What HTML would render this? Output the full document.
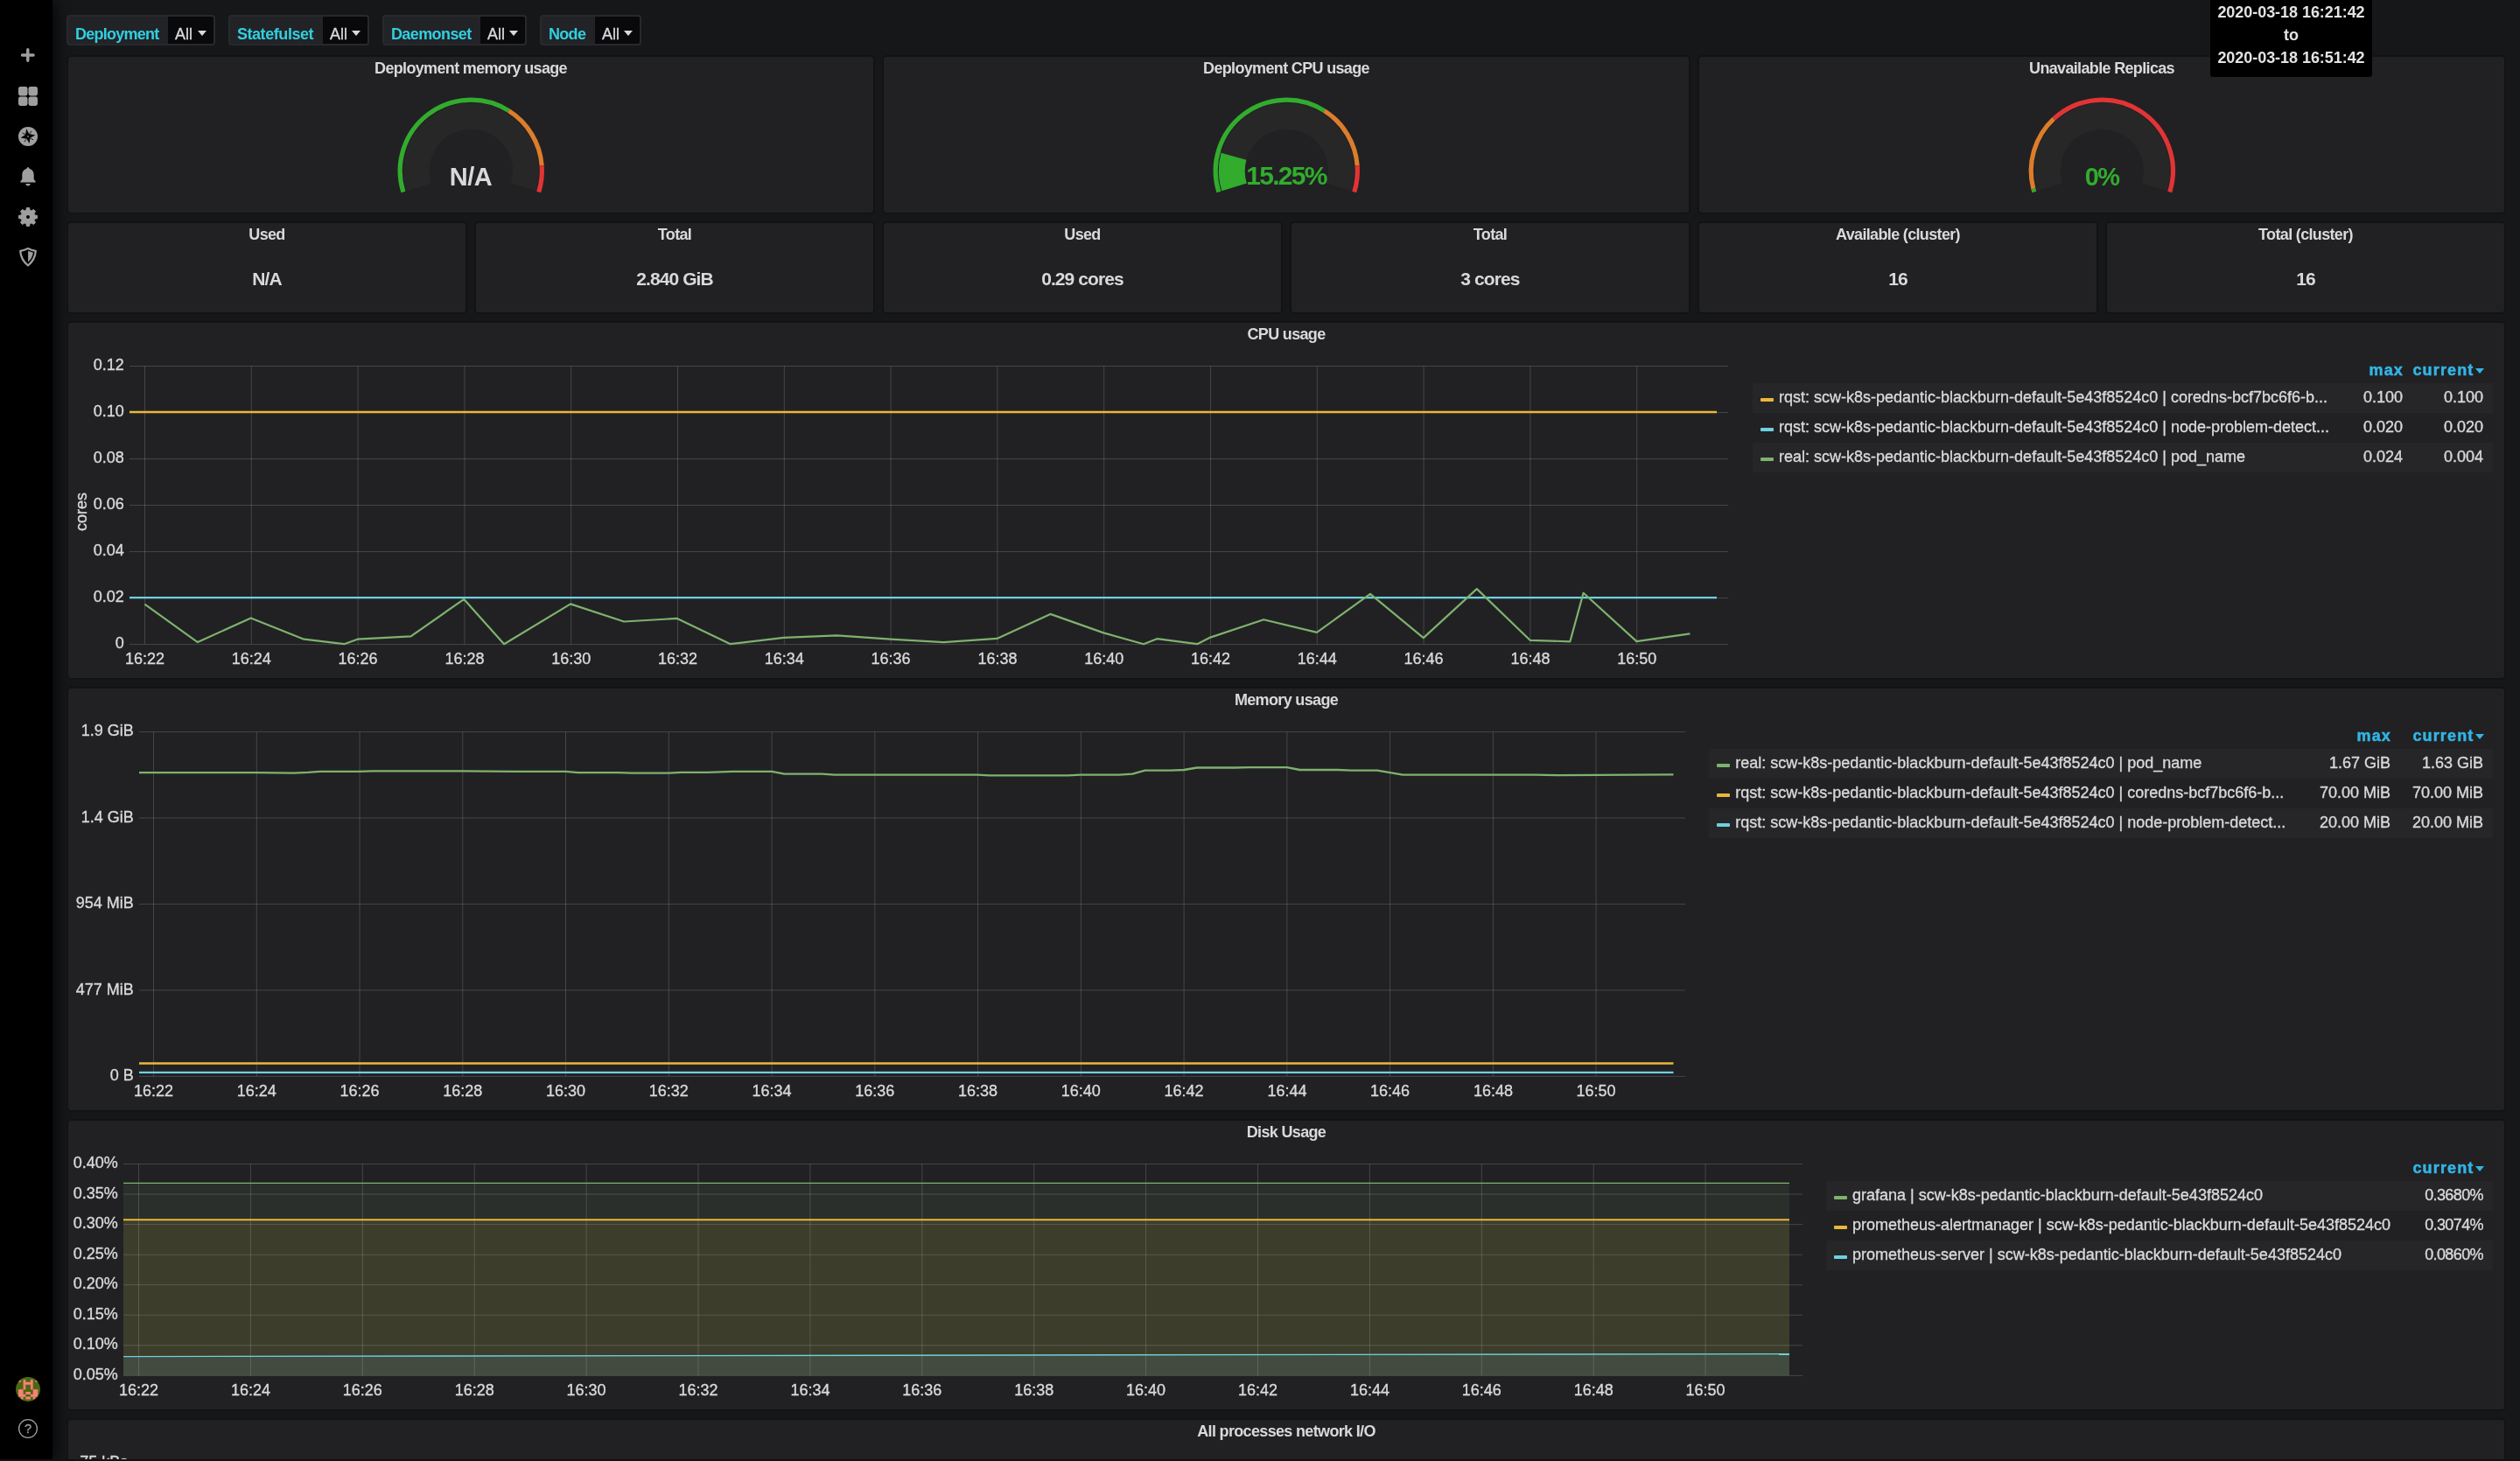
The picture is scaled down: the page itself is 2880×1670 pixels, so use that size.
<!DOCTYPE html>
<html lang="en"><head><meta charset="utf-8"><title>Kubernetes Deployment Statefulset Daemonset metrics - Grafana</title>
<style>
html,body{margin:0;padding:0}
html{width:2880px;height:1670px;overflow:hidden;background:#161719}
body{will-change:transform;width:2880px;height:1670px;overflow:hidden;background:#161719;position:relative;
 font-family:"Liberation Sans",sans-serif;font-size:18px;color:#d8d9da}
*{box-sizing:border-box}
#side{position:absolute;left:0;top:0;width:60px;height:1670px;background:#000;box-shadow:0 0 20px #000}
#side svg{position:absolute;left:0}
.var{position:absolute;top:17px;height:35px;border-radius:4px}
.vl{position:absolute;top:0;left:0;height:35px;background:#222327;border:2px solid #28292d;border-right:0;border-radius:4px 0 0 4px;
 color:#31cfe0;font-weight:bold;font-size:18px;letter-spacing:-0.75px;line-height:40.6px;padding-left:7.9px;white-space:nowrap}
.vv{position:absolute;top:0;height:35px;background:#09090b;border:2px solid #28292d;border-left:0;border-radius:0 4px 4px 0;
 color:#d8d9da;font-size:18px;line-height:40.6px;padding-left:8px;white-space:nowrap;-webkit-text-stroke:0.35px #d8d9da}
.vv i{position:absolute;right:8px;top:16.2px;width:0;height:0;border-left:5.4px solid transparent;border-right:5.4px solid transparent;border-top:6.1px solid #d8d9da}
.panel{position:absolute;background:#212124;border-radius:3px;overflow:hidden;box-shadow:0 0 0 2px #131314}
.pt{position:absolute;left:0;right:0;top:0;height:30px;line-height:30px;text-align:center;font-weight:bold;font-size:18px;letter-spacing:-0.66px;color:#d8d9da;white-space:nowrap}
.sv{position:absolute;left:0;right:0;text-align:center;font-weight:bold;white-space:nowrap}
svg text{font-family:"Liberation Sans",sans-serif;stroke:#d8d9da;stroke-width:0.35px}
.lg{position:absolute;font-size:18px;white-space:nowrap;-webkit-text-stroke:0.35px #d8d9da}
.lr{position:absolute;left:0;right:0;height:34px;line-height:34px}
.lr.o{background:#262628}
.lr b{position:absolute;left:9px;top:17px;width:15px;height:4px;border-radius:1px}
.lr span{position:absolute;top:-1px}
.lh{-webkit-text-stroke:0.5px #33b5e5;position:absolute;color:#33b5e5;font-weight:bold;font-size:18px;letter-spacing:1.15px;white-space:nowrap;line-height:20px}
.lh i{position:absolute;right:-11.5px;top:7.5px;width:0;height:0;border-left:5px solid transparent;border-right:5px solid transparent;border-top:6px solid #33b5e5}
#tip{position:absolute;left:2526px;top:-6px;width:185px;height:94px;background:#000;border-radius:3px;color:#e3e3e3;font-weight:bold;font-size:18px;text-align:center;line-height:26px;padding-top:7px;letter-spacing:-0.05px;white-space:nowrap}
</style></head><body>
<div id="side">
<svg style="top:51.0px;left:19.5px" width="24" height="24" viewBox="0 0 24 24"><path d="M11.8 5.700V18.300M5.500 12H18.100" stroke="#9f9f9f" stroke-width="3.400" stroke-linecap="round" fill="none"/></svg>
<svg style="top:98.0px;left:19.5px" width="24" height="24" viewBox="0 0 24 24"><rect x="1" y="1" width="10.5" height="10.4" rx="2.4" fill="#9f9f9f"/><rect x="1" y="12.5" width="10.5" height="10.4" rx="2.4" fill="#9f9f9f"/><rect x="12.5" y="1" width="10.5" height="10.4" rx="2.4" fill="#9f9f9f"/><rect x="12.5" y="12.5" width="10.5" height="10.4" rx="2.4" fill="#9f9f9f"/></svg>
<svg style="top:144.0px;left:19.5px" width="24" height="24" viewBox="0 0 24 24"><circle cx="12" cy="12" r="11.05" fill="#9f9f9f"/><path d="M10.25 3.24L13.20 8.90L20.40 10.40L14.70 13.50L13.50 20.10L10.60 14.85L3.60 13.50L9.04 10.03Z" fill="#050505"/><path d="M14.10 8.50L15.70 6.10M6.10 8.20L8.80 9.60M15.40 14.20L17.70 15.60M8.10 17.80L9.50 15.70" stroke="#050505" stroke-width="0.9" stroke-linecap="round" fill="none"/><rect x="11.2" y="11.1" width="1.7" height="1.7" fill="#777"/></svg>
<svg style="top:190.0px;left:19.5px" width="24" height="24" viewBox="0 0 24 24"><path d="M12 1.2c.9 0 1.5.6 1.600 1.500 3.100.8 5.100 3.600 5.100 7.300v5.000l1.900 2.300v1.300H3.400v-1.300l1.900-2.300v-5.000c0-3.700 2.000-6.500 5.100-7.300.1-.9.700-1.500 1.600-1.500z" fill="#9f9f9f"/><path d="M9.200 20.100h5.600c-.3 1.500-1.400 2.500-2.800 2.500s-2.500-1.000-2.800-2.500z" fill="#9f9f9f"/></svg>
<svg style="top:236.0px;left:19.5px" width="24" height="24" viewBox="0 0 24 24"><path d="M10.40 1.42 L13.60 1.42 L14.13 4.29 L15.94 5.04 L18.35 3.39 L20.61 5.65 L18.96 8.06 L19.71 9.87 L22.58 10.40 L22.58 13.60 L19.71 14.13 L18.96 15.94 L20.61 18.35 L18.35 20.61 L15.94 18.96 L14.13 19.71 L13.60 22.58 L10.40 22.58 L9.87 19.71 L8.06 18.96 L5.65 20.61 L3.39 18.35 L5.04 15.94 L4.29 14.13 L1.42 13.60 L1.42 10.40 L4.29 9.87 L5.04 8.06 L3.39 5.65 L5.65 3.39 L8.06 5.04 L9.87 4.29Z" fill="#9f9f9f" stroke="#9f9f9f" stroke-width="0.9" stroke-linejoin="round"/><circle cx="12" cy="12" r="2.0" fill="#000"/></svg>
<svg style="top:282.0px;left:19.5px" width="24" height="24" viewBox="0 0 24 24"><path d="M12 2.100C9.500 3.400 6.500 4.400 3.200 4.900C3.600 11.500 7 17.500 12 21.500C17 17.500 20.400 11.500 20.800 4.900C17.500 4.400 14.500 3.400 12 2.100Z" fill="none" stroke="#9f9f9f" stroke-width="2.200" stroke-linejoin="round"/><path d="M12.100 4.700L17.900 6.700C17.300 11 15.200 14.600 12.100 17.600Z" fill="#9f9f9f"/></svg>
<svg style="top:1574px;left:17.9px" width="28" height="28" viewBox="0 0 28 28"><defs><clipPath id="avc"><circle cx="14" cy="14" r="13.9"/></clipPath></defs><g clip-path="url(#avc)"><rect width="28" height="28" fill="#4b6610"/><rect x="3.00" y="3.00" width="2.79" height="2.99" fill="#fa8078"/><rect x="8.57" y="3.00" width="2.79" height="2.99" fill="#fa8078"/><rect x="16.93" y="3.00" width="2.79" height="2.99" fill="#fa8078"/><rect x="22.50" y="3.00" width="2.79" height="2.99" fill="#fa8078"/><rect x="8.57" y="5.79" width="11.14" height="2.99" fill="#fa8078"/><rect x="8.57" y="8.57" width="2.79" height="2.99" fill="#fa8078"/><rect x="16.93" y="8.57" width="2.79" height="2.99" fill="#fa8078"/><rect x="8.57" y="11.36" width="2.79" height="2.99" fill="#fa8078"/><rect x="16.93" y="11.36" width="2.79" height="2.99" fill="#fa8078"/><rect x="3.00" y="14.14" width="5.57" height="2.99" fill="#fa8078"/><rect x="19.71" y="14.14" width="5.57" height="2.99" fill="#fa8078"/><rect x="3.00" y="16.93" width="5.57" height="2.99" fill="#fa8078"/><rect x="11.36" y="16.93" width="5.57" height="2.99" fill="#fa8078"/><rect x="19.71" y="16.93" width="5.57" height="2.99" fill="#fa8078"/><rect x="3.00" y="19.71" width="8.36" height="2.99" fill="#fa8078"/><rect x="16.93" y="19.71" width="8.36" height="2.99" fill="#fa8078"/><rect x="5.79" y="22.50" width="2.79" height="2.99" fill="#fa8078"/><rect x="11.36" y="22.50" width="5.57" height="2.99" fill="#fa8078"/><rect x="19.71" y="22.50" width="2.79" height="2.99" fill="#fa8078"/></g><circle cx="14" cy="14" r="13.400" fill="none" stroke="#56791a" stroke-opacity="0.5" stroke-width="1"/></svg>
<svg style="top:1621px;left:20px" width="24" height="24" viewBox="0 0 24 24"><circle cx="12" cy="12" r="10.400" fill="none" stroke="#9f9f9f" stroke-width="1.300"/><text x="12" y="17.200" text-anchor="middle" font-size="14.500" fill="#9f9f9f" style="stroke:#9f9f9f;stroke-width:0.3px">?</text></svg>
</div>
<div class="var" style="left:76px;width:170px"><div class="vl" style="width:116px;letter-spacing:-0.75px">Deployment</div><div class="vv" style="left:116px;width:54px">All<i></i></div></div>
<div class="var" style="left:261px;width:161px"><div class="vl" style="width:108px;letter-spacing:-0.43px">Statefulset</div><div class="vv" style="left:108px;width:53px">All<i></i></div></div>
<div class="var" style="left:437px;width:165px"><div class="vl" style="width:112px;letter-spacing:-0.58px">Daemonset</div><div class="vv" style="left:112px;width:53px">All<i></i></div></div>
<div class="var" style="left:617px;width:116px"><div class="vl" style="width:63px;letter-spacing:-0.65px">Node</div><div class="vv" style="left:63px;width:53px">All<i></i></div></div>
<div class="panel" style="left:78px;top:65px;width:920px;height:178px"><div class="pt" style="top:-2px">Deployment memory usage</div>
<svg style="position:absolute;left:0;top:0" width="920" height="178" viewBox="0 0 920 178"><path d="M400.58 148.90A62.55 62.55 0 1 1 520.02 148.90" fill="none" stroke="#272727" stroke-width="29.9"/><path d="M382.87 154.42A81.1 81.1 0 0 1 503.50 61.67" fill="none" stroke="rgb(50,172,45)" stroke-width="5.2"/><path d="M503.50 61.67A81.1 81.1 0 0 1 541.19 124.42" fill="none" stroke="rgb(221,125,42)" stroke-width="5.2"/><path d="M541.19 124.42A81.1 81.1 0 0 1 537.73 154.42" fill="none" stroke="rgb(226,52,52)" stroke-width="5.2"/></svg>
<div class="sv" style="top:120px;font-size:29px;line-height:34px;color:#d8d9da;letter-spacing:-0.4px">N/A</div>
</div>
<div class="panel" style="left:1010px;top:65px;width:920px;height:178px"><div class="pt" style="top:-2px">Deployment CPU usage</div>
<svg style="position:absolute;left:0;top:0" width="920" height="178" viewBox="0 0 920 178"><path d="M400.58 148.90A62.55 62.55 0 1 1 520.02 148.90" fill="none" stroke="#272727" stroke-width="29.9"/><path d="M400.58 148.90A62.55 62.55 0 0 1 400.00 113.66" fill="none" stroke="rgb(50,172,45)" stroke-width="29.9"/><path d="M382.87 154.42A81.1 81.1 0 0 1 503.50 61.67" fill="none" stroke="rgb(50,172,45)" stroke-width="5.2"/><path d="M503.50 61.67A81.1 81.1 0 0 1 541.19 124.42" fill="none" stroke="rgb(221,125,42)" stroke-width="5.2"/><path d="M541.19 124.42A81.1 81.1 0 0 1 537.73 154.42" fill="none" stroke="rgb(226,52,52)" stroke-width="5.2"/></svg>
<div class="sv" style="top:119px;font-size:30px;line-height:34px;color:rgb(50,172,45);letter-spacing:-1.7px">15.25%</div>
</div>
<div class="panel" style="left:1942px;top:65px;width:920px;height:178px"><div class="pt" style="top:-2px">Unavailable Replicas</div>
<svg style="position:absolute;left:0;top:0" width="920" height="178" viewBox="0 0 920 178"><path d="M400.58 148.90A62.55 62.55 0 1 1 520.02 148.90" fill="none" stroke="#272727" stroke-width="29.9"/><path d="M382.87 154.42A81.1 81.1 0 0 1 381.86 150.91" fill="none" stroke="rgb(50,172,45)" stroke-width="5.2"/><path d="M381.86 150.91A81.1 81.1 0 0 1 405.07 70.91" fill="none" stroke="rgb(221,125,42)" stroke-width="5.2"/><path d="M405.07 70.91A81.1 81.1 0 0 1 537.73 154.42" fill="none" stroke="rgb(226,52,52)" stroke-width="5.2"/></svg>
<div class="sv" style="top:120px;font-size:29px;line-height:34px;color:rgb(50,172,45);letter-spacing:-1.6px">0%</div>
</div>
<div class="panel" style="left:78px;top:255px;width:454px;height:102px"><div class="pt" style="top:-2px">Used</div><div class="sv" style="top:51px;font-size:21px;line-height:26px;letter-spacing:-0.9px">N/A</div></div>
<div class="panel" style="left:544px;top:255px;width:454px;height:102px"><div class="pt" style="top:-2px">Total</div><div class="sv" style="top:51px;font-size:21px;line-height:26px;letter-spacing:-0.9px">2.840 GiB</div></div>
<div class="panel" style="left:1010px;top:255px;width:454px;height:102px"><div class="pt" style="top:-2px">Used</div><div class="sv" style="top:51px;font-size:21px;line-height:26px;letter-spacing:-0.9px">0.29 cores</div></div>
<div class="panel" style="left:1476px;top:255px;width:454px;height:102px"><div class="pt" style="top:-2px">Total</div><div class="sv" style="top:51px;font-size:21px;line-height:26px;letter-spacing:-0.9px">3 cores</div></div>
<div class="panel" style="left:1942px;top:255px;width:454px;height:102px"><div class="pt" style="top:-2px">Available (cluster)</div><div class="sv" style="top:51px;font-size:21px;line-height:26px;letter-spacing:-0.9px">16</div></div>
<div class="panel" style="left:2408px;top:255px;width:454px;height:102px"><div class="pt" style="top:-2px">Total (cluster)</div><div class="sv" style="top:51px;font-size:21px;line-height:26px;letter-spacing:-0.9px">16</div></div>
<div class="panel" style="left:78px;top:369px;width:2784px;height:406px"><div class="pt" style="top:-2px">CPU usage</div>
<svg style="position:absolute;left:0;top:0" width="2784" height="406" viewBox="78 369 2784 406"><path d="M148 418.5H1975M148 471.5H1975M148 524.5H1975M148 577.5H1975M148 630.6H1975M148 683.6H1975M148 736.6H1975M165.5 418.5V736.6M287.3 418.5V736.6M409.1 418.5V736.6M530.9 418.5V736.6M652.7 418.5V736.6M774.5 418.5V736.6M896.3 418.5V736.6M1018.1 418.5V736.6M1139.9 418.5V736.6M1261.7 418.5V736.6M1383.5 418.5V736.6M1505.3 418.5V736.6M1627.1 418.5V736.6M1748.9 418.5V736.6M1870.7 418.5V736.6" stroke="#c8c8c8" stroke-opacity="0.22" stroke-width="1" fill="none"/><path d="M148.0 471.0L1962.0 471.0" fill="none" stroke="#eab839" stroke-width="2.4" stroke-linejoin="round"/><path d="M148.0 683.1L1962.0 683.1" fill="none" stroke="#6ed0e0" stroke-width="2.4" stroke-linejoin="round"/><path d="M165.4 690.6L225.9 734.1L286.7 706.4L347.4 730.7L393.3 736.2L408.5 730.7L469.5 727.3L530.3 684.9L576.1 736.2L652.0 690.4L713.1 710.5L773.9 706.9L834.8 736.2L895.8 728.9L956.6 726.3L1017.6 730.7L1078.4 734.1L1139.4 729.9L1200.4 701.9L1261.2 723.4L1307.0 736.2L1322.2 730.2L1368.2 736.2L1383.3 728.6L1444.2 708.2L1505.0 722.9L1566.0 678.9L1626.8 729.1L1687.8 673.1L1748.6 731.8L1794.4 733.3L1809.6 677.8L1870.4 733.1L1931.4 724.4" fill="none" stroke="#7eb26d" stroke-width="2.2" stroke-linejoin="round"/><text x="141.7" y="423.1" text-anchor="end" font-size="18" fill="#d8d9da" >0.12</text><text x="141.7" y="476.1" text-anchor="end" font-size="18" fill="#d8d9da" >0.10</text><text x="141.7" y="529.1" text-anchor="end" font-size="18" fill="#d8d9da" >0.08</text><text x="141.7" y="582.1" text-anchor="end" font-size="18" fill="#d8d9da" >0.06</text><text x="141.7" y="635.2" text-anchor="end" font-size="18" fill="#d8d9da" >0.04</text><text x="141.7" y="688.2" text-anchor="end" font-size="18" fill="#d8d9da" >0.02</text><text x="141.7" y="741.2" text-anchor="end" font-size="18" fill="#d8d9da" >0</text><text x="165.5" y="759.2" text-anchor="middle" font-size="18" fill="#d8d9da" >16:22</text><text x="287.3" y="759.2" text-anchor="middle" font-size="18" fill="#d8d9da" >16:24</text><text x="409.1" y="759.2" text-anchor="middle" font-size="18" fill="#d8d9da" >16:26</text><text x="530.9" y="759.2" text-anchor="middle" font-size="18" fill="#d8d9da" >16:28</text><text x="652.7" y="759.2" text-anchor="middle" font-size="18" fill="#d8d9da" >16:30</text><text x="774.5" y="759.2" text-anchor="middle" font-size="18" fill="#d8d9da" >16:32</text><text x="896.3" y="759.2" text-anchor="middle" font-size="18" fill="#d8d9da" >16:34</text><text x="1018.1" y="759.2" text-anchor="middle" font-size="18" fill="#d8d9da" >16:36</text><text x="1139.9" y="759.2" text-anchor="middle" font-size="18" fill="#d8d9da" >16:38</text><text x="1261.7" y="759.2" text-anchor="middle" font-size="18" fill="#d8d9da" >16:40</text><text x="1383.5" y="759.2" text-anchor="middle" font-size="18" fill="#d8d9da" >16:42</text><text x="1505.3" y="759.2" text-anchor="middle" font-size="18" fill="#d8d9da" >16:44</text><text x="1627.1" y="759.2" text-anchor="middle" font-size="18" fill="#d8d9da" >16:46</text><text x="1748.9" y="759.2" text-anchor="middle" font-size="18" fill="#d8d9da" >16:48</text><text x="1870.7" y="759.2" text-anchor="middle" font-size="18" fill="#d8d9da" >16:50</text><text transform="translate(98.5 585) rotate(-90)" text-anchor="middle" font-size="18" fill="#d8d9da">cores</text></svg>
</div>
<div class="lg" style="left:2003px;top:404px;width:846px;height:136px">
<div class="lh" style="right:102.0px;top:9px">max</div>
<div class="lh" style="right:21.5px;top:9px">current<i></i></div>
<div class="lr o" style="top:34px"><b style="background:#eab839"></b><span style="left:30px">rqst: scw-k8s-pedantic-blackburn-default-5e43f8524c0 | coredns-bcf7bc6f6-b...</span><span style="right:103.0px">0.100</span><span style="right:11.0px">0.100</span></div>
<div class="lr" style="top:68px"><b style="background:#6ed0e0"></b><span style="left:30px">rqst: scw-k8s-pedantic-blackburn-default-5e43f8524c0 | node-problem-detect...</span><span style="right:103.0px">0.020</span><span style="right:11.0px">0.020</span></div>
<div class="lr o" style="top:102px"><b style="background:#7eb26d"></b><span style="left:30px">real: scw-k8s-pedantic-blackburn-default-5e43f8524c0 | pod_name</span><span style="right:103.0px">0.024</span><span style="right:11.0px">0.004</span></div>
</div>
<div class="panel" style="left:78px;top:787px;width:2784px;height:482px"><div class="pt" style="top:-2px">Memory usage</div>
<svg style="position:absolute;left:0;top:0" width="2784" height="482" viewBox="78 787 2784 482"><path d="M159 836.6H1926M159 935.0H1926M159 1033.4H1926M159 1131.9H1926M159 1230.3H1926M175.5 836.6V1230.3M293.3 836.6V1230.3M411.0 836.6V1230.3M528.8 836.6V1230.3M646.5 836.6V1230.3M764.3 836.6V1230.3M882.1 836.6V1230.3M999.8 836.6V1230.3M1117.6 836.6V1230.3M1235.3 836.6V1230.3M1353.1 836.6V1230.3M1470.9 836.6V1230.3M1588.6 836.6V1230.3M1706.4 836.6V1230.3M1824.1 836.6V1230.3" stroke="#c8c8c8" stroke-opacity="0.22" stroke-width="1" fill="none"/><path d="M159.0 883.2L292.9 883.2L335.7 883.6L351.8 882.9L366.0 881.8L410.7 881.8L425.0 881.4L528.6 881.4L589.3 881.8L646.4 881.8L660.7 883.2L707.1 883.2L721.4 883.6L764.3 883.6L778.6 882.9L808.9 882.9L837.5 881.8L882.1 881.8L896.4 884.6L939.3 884.6L953.6 885.7L1116.8 885.7L1131.0 886.4L1220.4 886.4L1234.6 885.7L1279.3 885.7L1294.3 884.6L1308.6 880.7L1338.2 880.7L1353.2 880.0L1367.9 877.5L1411.4 877.5L1427.5 877.1L1471.0 877.1L1485.4 880.0L1529.3 880.0L1544.3 880.7L1574.0 880.7L1603.2 885.7L1754.0 885.7L1780.0 886.1L1912.5 885.4" fill="none" stroke="#7eb26d" stroke-width="2.3" stroke-linejoin="round"/><path d="M159.0 1215.5L1912.5 1215.5" fill="none" stroke="#eab839" stroke-width="2.5" stroke-linejoin="round"/><path d="M159.0 1225.9L1912.5 1225.9" fill="none" stroke="#6ed0e0" stroke-width="2.4" stroke-linejoin="round"/><text x="152.7" y="841.2" text-anchor="end" font-size="18" fill="#d8d9da" >1.9 GiB</text><text x="152.7" y="939.6" text-anchor="end" font-size="18" fill="#d8d9da" >1.4 GiB</text><text x="152.7" y="1038.0" text-anchor="end" font-size="18" fill="#d8d9da" >954 MiB</text><text x="152.7" y="1136.5" text-anchor="end" font-size="18" fill="#d8d9da" >477 MiB</text><text x="152.7" y="1234.9" text-anchor="end" font-size="18" fill="#d8d9da" >0 B</text><text x="175.5" y="1252.9" text-anchor="middle" font-size="18" fill="#d8d9da" >16:22</text><text x="293.3" y="1252.9" text-anchor="middle" font-size="18" fill="#d8d9da" >16:24</text><text x="411.0" y="1252.9" text-anchor="middle" font-size="18" fill="#d8d9da" >16:26</text><text x="528.8" y="1252.9" text-anchor="middle" font-size="18" fill="#d8d9da" >16:28</text><text x="646.5" y="1252.9" text-anchor="middle" font-size="18" fill="#d8d9da" >16:30</text><text x="764.3" y="1252.9" text-anchor="middle" font-size="18" fill="#d8d9da" >16:32</text><text x="882.1" y="1252.9" text-anchor="middle" font-size="18" fill="#d8d9da" >16:34</text><text x="999.8" y="1252.9" text-anchor="middle" font-size="18" fill="#d8d9da" >16:36</text><text x="1117.6" y="1252.9" text-anchor="middle" font-size="18" fill="#d8d9da" >16:38</text><text x="1235.3" y="1252.9" text-anchor="middle" font-size="18" fill="#d8d9da" >16:40</text><text x="1353.1" y="1252.9" text-anchor="middle" font-size="18" fill="#d8d9da" >16:42</text><text x="1470.9" y="1252.9" text-anchor="middle" font-size="18" fill="#d8d9da" >16:44</text><text x="1588.6" y="1252.9" text-anchor="middle" font-size="18" fill="#d8d9da" >16:46</text><text x="1706.4" y="1252.9" text-anchor="middle" font-size="18" fill="#d8d9da" >16:48</text><text x="1824.1" y="1252.9" text-anchor="middle" font-size="18" fill="#d8d9da" >16:50</text></svg>
</div>
<div class="lg" style="left:1953.3px;top:822px;width:895.7px;height:136px">
<div class="lh" style="right:116.0px;top:9px">max</div>
<div class="lh" style="right:21.5px;top:9px">current<i></i></div>
<div class="lr o" style="top:34px"><b style="background:#7eb26d"></b><span style="left:30px">real: scw-k8s-pedantic-blackburn-default-5e43f8524c0 | pod_name</span><span style="right:117.0px">1.67 GiB</span><span style="right:11.0px">1.63 GiB</span></div>
<div class="lr" style="top:68px"><b style="background:#eab839"></b><span style="left:30px">rqst: scw-k8s-pedantic-blackburn-default-5e43f8524c0 | coredns-bcf7bc6f6-b...</span><span style="right:117.0px">70.00 MiB</span><span style="right:11.0px">70.00 MiB</span></div>
<div class="lr o" style="top:102px"><b style="background:#6ed0e0"></b><span style="left:30px">rqst: scw-k8s-pedantic-blackburn-default-5e43f8524c0 | node-problem-detect...</span><span style="right:117.0px">20.00 MiB</span><span style="right:11.0px">20.00 MiB</span></div>
</div>
<div class="panel" style="left:78px;top:1281px;width:2784px;height:330px"><div class="pt" style="top:-2px">Disk Usage</div>
<svg style="position:absolute;left:0;top:0" width="2784" height="330" viewBox="78 1281 2784 330"><path d="M141 1352.4H2045V1572.3H141Z" fill="#7eb26d" fill-opacity="0.1"/><path d="M141 1394.2H2045V1572.3H141Z" fill="#eab839" fill-opacity="0.1"/><path d="M141 1550.6L2045 1547.6V1572.3H141Z" fill="#6ed0e0" fill-opacity="0.1"/><path d="M141 1330.5H2060M141 1365.0H2060M141 1399.6H2060M141 1434.2H2060M141 1468.7H2060M141 1503.2H2060M141 1537.8H2060M141 1572.3H2060M158.5 1330.5V1572.3M286.4 1330.5V1572.3M414.3 1330.5V1572.3M542.2 1330.5V1572.3M670.1 1330.5V1572.3M798.0 1330.5V1572.3M925.9 1330.5V1572.3M1053.8 1330.5V1572.3M1181.7 1330.5V1572.3M1309.6 1330.5V1572.3M1437.5 1330.5V1572.3M1565.4 1330.5V1572.3M1693.3 1330.5V1572.3M1821.2 1330.5V1572.3M1949.1 1330.5V1572.3" stroke="#c8c8c8" stroke-opacity="0.22" stroke-width="1" fill="none"/><path d="M141.0 1352.4L2045.0 1352.4" fill="none" stroke="#7eb26d" stroke-width="1.3" stroke-linejoin="round"/><path d="M141.0 1394.2L2045.0 1394.2" fill="none" stroke="#eab839" stroke-width="2.0" stroke-linejoin="round"/><path d="M141.0 1550.6L2045.0 1547.6" fill="none" stroke="#6ed0e0" stroke-width="1.4" stroke-linejoin="round"/><text x="134.7" y="1335.1" text-anchor="end" font-size="18" fill="#d8d9da" >0.40%</text><text x="134.7" y="1369.6" text-anchor="end" font-size="18" fill="#d8d9da" >0.35%</text><text x="134.7" y="1404.2" text-anchor="end" font-size="18" fill="#d8d9da" >0.30%</text><text x="134.7" y="1438.8" text-anchor="end" font-size="18" fill="#d8d9da" >0.25%</text><text x="134.7" y="1473.3" text-anchor="end" font-size="18" fill="#d8d9da" >0.20%</text><text x="134.7" y="1507.8" text-anchor="end" font-size="18" fill="#d8d9da" >0.15%</text><text x="134.7" y="1542.4" text-anchor="end" font-size="18" fill="#d8d9da" >0.10%</text><text x="134.7" y="1576.9" text-anchor="end" font-size="18" fill="#d8d9da" >0.05%</text><text x="158.5" y="1594.9" text-anchor="middle" font-size="18" fill="#d8d9da" >16:22</text><text x="286.4" y="1594.9" text-anchor="middle" font-size="18" fill="#d8d9da" >16:24</text><text x="414.3" y="1594.9" text-anchor="middle" font-size="18" fill="#d8d9da" >16:26</text><text x="542.2" y="1594.9" text-anchor="middle" font-size="18" fill="#d8d9da" >16:28</text><text x="670.1" y="1594.9" text-anchor="middle" font-size="18" fill="#d8d9da" >16:30</text><text x="798.0" y="1594.9" text-anchor="middle" font-size="18" fill="#d8d9da" >16:32</text><text x="925.9" y="1594.9" text-anchor="middle" font-size="18" fill="#d8d9da" >16:34</text><text x="1053.8" y="1594.9" text-anchor="middle" font-size="18" fill="#d8d9da" >16:36</text><text x="1181.7" y="1594.9" text-anchor="middle" font-size="18" fill="#d8d9da" >16:38</text><text x="1309.6" y="1594.9" text-anchor="middle" font-size="18" fill="#d8d9da" >16:40</text><text x="1437.5" y="1594.9" text-anchor="middle" font-size="18" fill="#d8d9da" >16:42</text><text x="1565.4" y="1594.9" text-anchor="middle" font-size="18" fill="#d8d9da" >16:44</text><text x="1693.3" y="1594.9" text-anchor="middle" font-size="18" fill="#d8d9da" >16:46</text><text x="1821.2" y="1594.9" text-anchor="middle" font-size="18" fill="#d8d9da" >16:48</text><text x="1949.1" y="1594.9" text-anchor="middle" font-size="18" fill="#d8d9da" >16:50</text></svg>
</div>
<div class="lg" style="left:2087px;top:1316px;width:762px;height:136px">
<div class="lh" style="right:21.5px;top:9px">current<i></i></div>
<div class="lr o" style="top:34px"><b style="background:#7eb26d"></b><span style="left:30px">grafana | scw-k8s-pedantic-blackburn-default-5e43f8524c0</span><span style="right:11.0px;letter-spacing:-0.6px">0.3680%</span></div>
<div class="lr" style="top:68px"><b style="background:#eab839"></b><span style="left:30px">prometheus-alertmanager | scw-k8s-pedantic-blackburn-default-5e43f8524c0</span><span style="right:11.0px;letter-spacing:-0.6px">0.3074%</span></div>
<div class="lr o" style="top:102px"><b style="background:#6ed0e0"></b><span style="left:30px">prometheus-server | scw-k8s-pedantic-blackburn-default-5e43f8524c0</span><span style="right:11.0px;letter-spacing:-0.6px">0.0860%</span></div>
</div>
<div class="panel" style="left:78px;top:1623px;width:2784px;height:47px;border-radius:3px 3px 0 0"><div class="pt" style="top:-2px">All processes network I/O</div><div style="position:absolute;left:13.3px;top:38px;font-size:18px;line-height:20px;-webkit-text-stroke:0.35px #d8d9da">75 kBs</div></div>
<div style="position:absolute;left:0;top:1668.300px;width:2880px;height:1.700px;background:#121213"></div>
<div id="tip">2020-03-18 16:21:42<br>to<br>2020-03-18 16:51:42</div>
</body></html>
